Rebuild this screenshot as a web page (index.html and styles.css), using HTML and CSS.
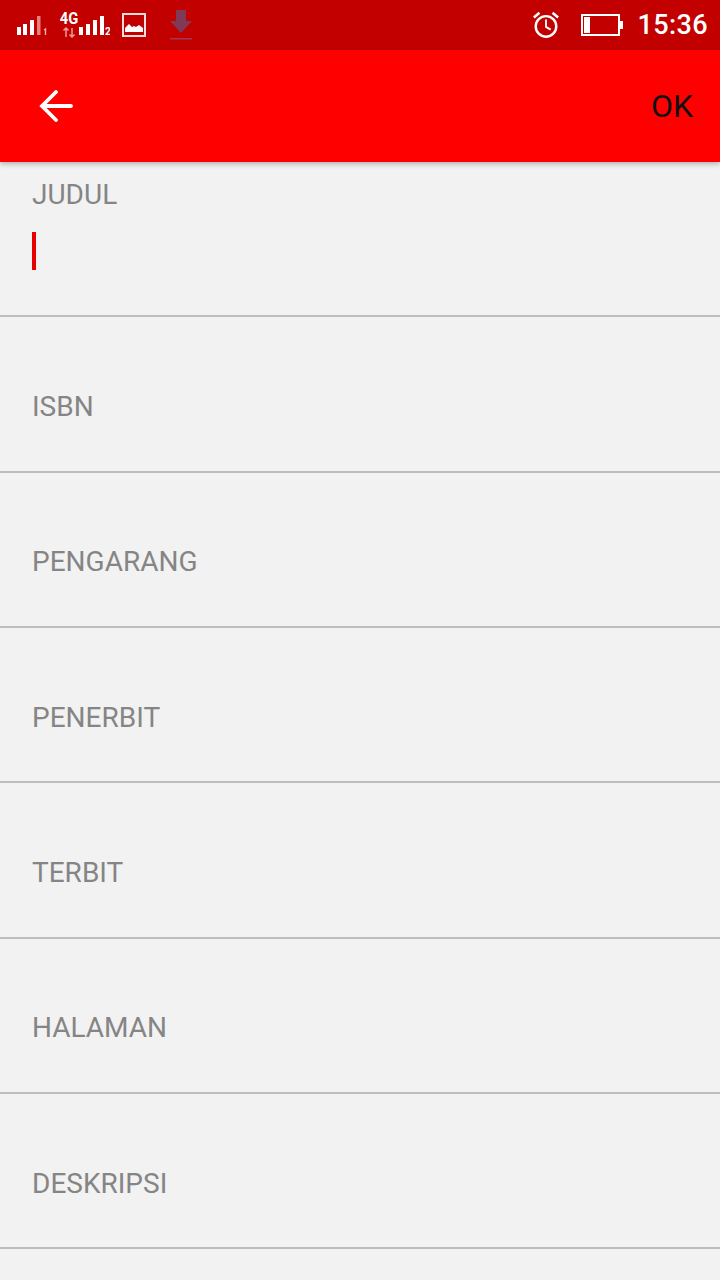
FILE: index.html
```html
<!DOCTYPE html>
<html lang="id">
<head>
<meta charset="utf-8">
<title>Tambah Buku</title>
<link rel="stylesheet" href="styles.css">
</head>
<body>
<div class="status">
  <div class="status-left">
    <svg class="ic-sig1" width="34" height="22" viewBox="0 0 34 22"><g fill="#fff"><rect x="2" y="12" width="4" height="8"/><rect x="8" y="9" width="4" height="11"/><rect x="15" y="5" width="4" height="15"/></g><rect x="22" y="1" width="3.500" height="19" fill="#e88080"/><path d="M29 15l1.500-1v6" fill="none" stroke="#f0b0b0" stroke-width="1.400"/></svg>
    <div class="net"><span class="net-4g">4G</span><svg width="14" height="11" viewBox="0 0 14 11"><path d="M4 10V1M1.500 3.500 4 1l2.500 2.500M10 1v9M7.500 7.500 10 10l2.500-2.500" fill="none" stroke="#f09a9a" stroke-width="1.500"/></svg></div>
    <svg class="ic-sig2" width="32" height="22" viewBox="0 0 32 22"><g fill="#fff"><rect x="1" y="12" width="4" height="8"/><rect x="8" y="9" width="4" height="11"/><rect x="15" y="5" width="4" height="15"/><rect x="22" y="1" width="4" height="19"/></g><text x="27" y="20" class="sim">2</text></svg>
    <svg class="ic-pic" width="24" height="24" viewBox="0 0 24 24"><rect x="1" y="1" width="22" height="22" fill="none" stroke="#fbdcdc" stroke-width="2"/><path d="M3 19v-4l4-4 3 3 2-1 2 1 3-2 4 3v4z" fill="#fff"/></svg>
    <svg class="ic-dl" width="22" height="30" viewBox="0 0 22 30"><path d="M6 0h10v11h6L11 23 0 11h6z" fill="#7f3a55"/><rect x="0" y="28" width="22" height="1.500" fill="#a03a50"/></svg>
  </div>
  <div class="status-right">
    <svg class="ic-alarm" width="28" height="30" viewBox="0 0 30 32"><circle cx="15" cy="17.500" r="11" fill="none" stroke="#fff" stroke-width="2.600"/><path d="M15 10v8l5 3" fill="none" stroke="#fff" stroke-width="2"/><path d="M2 8l6-5M28 8l-6-5" fill="none" stroke="#fff" stroke-width="2.800"/></svg>
    <svg class="ic-batt" width="42" height="22" viewBox="0 0 42 22"><rect x="1" y="1" width="37" height="20" fill="none" stroke="#fff" stroke-width="2"/><rect x="3" y="3" width="6" height="16" fill="#fff"/><rect x="39" y="7" width="3" height="8" fill="#fff"/></svg>
    <span class="time">15:36</span>
  </div>
</div>
<header class="toolbar">
  <svg class="ic-back" width="34" height="32" viewBox="0 0 34 32"><path d="M32 16H3M17 2 3 16l14 14" fill="none" stroke="#fff" stroke-width="3.800" stroke-linecap="round"/></svg>
  <span class="ok">OK</span>
</header>
<main class="form">
  <div class="field field-active"><span class="label">JUDUL</span><span class="cursor"></span></div>
  <div class="field"><span class="label">ISBN</span></div>
  <div class="field"><span class="label">PENGARANG</span></div>
  <div class="field"><span class="label">PENERBIT</span></div>
  <div class="field"><span class="label">TERBIT</span></div>
  <div class="field"><span class="label">HALAMAN</span></div>
  <div class="field"><span class="label">DESKRIPSI</span></div>
</main>
</body>
</html>
```
FILE: styles.css
```css
* { box-sizing: border-box; }
html, body { margin: 0; padding: 0; }
body {
  width: 720px;
  height: 1280px;
  overflow: hidden;
  background: #f2f2f2;
  font-family: Roboto, "Liberation Sans", sans-serif;
}
.status {
  height: 50px;
  background: #c20000;
  display: flex;
  justify-content: space-between;
  align-items: center;
  padding: 0 12px 0 15px;
  color: #fff;
}
.status-left { display: flex; align-items: center; }
.status-right { display: flex; align-items: center; }
.ic-sig1 { margin-top: 2px; margin-right: 11px; }
.net { display: flex; flex-direction: column; align-items: center; width: 18px; margin-top: -1px; }
.net-4g { font-size: 16px; font-weight: 700; line-height: 15px; transform: scaleX(.92); }
.net svg { margin-top: 1px; }
.ic-sig2 { margin-top: 2px; }
.sim { font: 700 10px Roboto, sans-serif; fill: #fff; }
.ic-pic { margin-left: 12px; }
.ic-dl { margin-left: 24px; }
.ic-alarm { margin-right: 21px; }
.ic-batt { margin-right: 14px; }
.time { font-size: 27px; font-weight: 500; line-height: 50px; letter-spacing: 0.4px; }
.toolbar {
  height: 112px;
  background: #ff0000;
  display: flex;
  justify-content: space-between;
  align-items: center;
  padding: 0 27px 0 39px;
  box-shadow: 0 2px 5px rgba(0, 0, 0, .28);
  position: relative;
}
.ok { font-size: 32px; color: #111; line-height: 1; }
.form { display: flex; flex-direction: column; }
.field {
  height: 155.33px;
  border-bottom: 2px solid #bdbdbd;
  padding: 0 32px 47.500px;
  display: flex;
  flex-direction: column;
  justify-content: flex-end;
}
.field-active { justify-content: flex-start; padding-top: 17px; padding-bottom: 0; }
.label { font-size: 28px; line-height: 32px; color: #858585; }
.cursor { width: 4px; height: 38px; background: #e60000; margin-top: 21px; }
```
